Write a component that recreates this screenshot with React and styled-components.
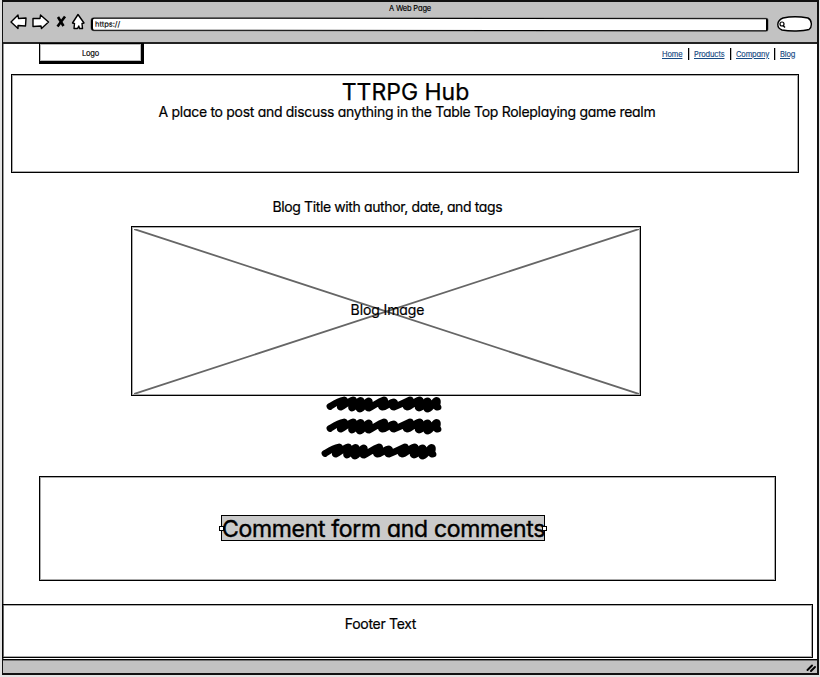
import React from "react";
import styled, { createGlobalStyle } from "styled-components";

const GlobalStyle = createGlobalStyle`
  * { box-sizing: border-box; }
  body { margin: 0; background: #fff; }
`;

const Browser = styled.div`
  width: 820px;
  height: 677px;
  display: flex;
  flex-direction: column;
  padding: 0 1px 2px 2px;
  background: #e4e4e4;
  color: #000;
  font-family: Inter, "Liberation Sans", sans-serif;
  font-feature-settings: "cv11";
  overflow: hidden;
`;

const Frame = styled.div`
  flex: 1;
  display: flex;
  flex-direction: column;
  border: 2px solid #111;
  border-left-width: 1px;
  background: #fff;
  box-shadow: inset 1px 0 0 #0006;
`;

const Chrome = styled.header`
  height: 42px;
  flex: none;
  background: #c2c2c2;
  border-bottom: 2px solid #222;
`;

const Small = styled.span`
  font-size: 7.5px;
  line-height: 9px;
  letter-spacing: ${(p) => p.$spacing || "-0.15px"};
  -webkit-text-stroke: 0.15px currentColor;
  white-space: nowrap;
`;

const WindowTitle = styled.div`
  display: flex;
  justify-content: center;
  padding: 2px 0 0 0;
  height: 11px;
`;

const Toolbar = styled.div`
  display: flex;
  align-items: flex-start;
  height: 28px;
`;

const NavIcons = styled.svg`
  width: 81px;
  height: 22px;
  margin-left: 5px;
  margin-top: -1px;
  flex: none;
`;

const Address = styled.div`
  width: 677px;
  height: 13px;
  margin: 5px 0 0 2px;
  padding: 0 0 0 2px;
  display: flex;
  align-items: center;
  background: #fff;
  border: 2px solid #000;
  border-width: 1px 2px 1px 2px;
  box-shadow: 0 0 0 0.5px #0006;
  border-radius: 3px 2px 2px 3px;
  transform: rotate(0.06deg);
`;

const Search = styled.svg`
  width: 38px;
  height: 18px;
  margin: 2px 0 0 8px;
  flex: none;
`;

const Page = styled.main`
  height: 615px;
  flex: none;
  display: flex;
  flex-direction: column;
  align-items: flex-start;
`;

const SiteHeader = styled.div`
  display: flex;
  align-items: flex-start;
  justify-content: space-between;
  width: 100%;
  height: 29px;
  padding: 0 20px 0 36px;
`;

const Logo = styled.div`
  width: 105px;
  height: 21px;
  margin-top: -1px;
  display: flex;
  align-items: center;
  justify-content: center;
  padding: 2px 0 0 0;
  border: solid #000;
  border-width: 1px 3px 3px 1px;
  box-shadow: inset 0 0 0 1px #0004;
`;

const Nav = styled.nav`
  display: flex;
  align-items: center;
  height: 12px;
  margin-top: 4px;
`;

const NavLink = styled(Small).attrs({ as: "a" })`
  color: #174a83;
  width: ${(p) => p.$width}px;
  text-decoration: underline;
  text-decoration-thickness: 1px;
  text-underline-offset: 1px;
`;

const Divider = styled.i`
  width: 1px;
  height: 12px;
  margin: 0 5px 0 5px;
  background: #000;
  box-shadow: 0.5px 0 0 #0008;
`;

const Panel = styled.section`
  width: ${(p) => p.$width}px;
  height: ${(p) => p.$height}px;
  flex: none;
  margin-left: ${(p) => p.$left}px;
  border: 1px solid #000;
  box-shadow: inset 0 0 0 1px #0005;
`;

const Hero = styled(Panel)`
  display: flex;
  flex-direction: column;
  align-items: center;
  padding: 6px 0 0 4px;
  margin-top: 1px;
`;

const Heading = styled.h1`
  margin: 0;
  font-size: 23px;
  font-weight: 400;
  line-height: 23px;
  -webkit-text-stroke: 0.25px #000;
`;

const Title = styled(Heading)`
  padding-right: 3px;
  line-height: 22px;
`;

const Copy = styled.p`
  margin: 0;
  font-size: 14px;
  line-height: 18px;
  white-space: nowrap;
  letter-spacing: ${(p) => p.$spacing}px;
  -webkit-text-stroke: 0.2px #000;
`;

const PostTitle = styled(Copy)`
  margin: 25px 0 10px 269.5px;
`;

const ImageSlot = styled(Panel)`
  display: grid;
  place-items: center;
  > * { grid-area: 1 / 1; }
`;

const Cross = styled.svg`
  width: 505px;
  height: 165px;
`;

const ImageLabel = styled(Copy)`
  padding: 0 0 2px 3px;
`;

const PostBody = styled.div`
  display: flex;
  flex-direction: column;
  height: 80px;
  margin-left: 314px;
`;

const Line = styled.svg`
  width: 126px;
  height: 18px;
  flex: none;
  margin: ${(p) => p.$top}px 0 0 ${(p) => p.$left}px;
`;

const Comments = styled(Panel)`
  padding: 38px 0 0 181px;
`;

const Selection = styled.div`
  display: flex;
  align-items: center;
  position: relative;
  width: 324px;
  height: 26px;
  background: #cacaca;
  border: 1px solid #000;
`;

const CommentText = styled(Heading).attrs({ as: "h2" })`
  letter-spacing: -0.32px;
  white-space: nowrap;
  padding-top: 3px;
  -webkit-text-stroke: 0.4px #000;
`;

const Handle = styled.i`
  position: absolute;
  top: 10px;
  ${(p) => p.$side}: -3px;
  width: 5px;
  height: 5px;
  background: #fff;
  border: 1px solid #000;
`;

const Footer = styled(Panel)`
  display: flex;
  justify-content: center;
  padding: 10px 54px 0 0;
  margin-top: 23px;
`;

const StatusBar = styled.footer`
  flex: 1;
  display: flex;
  justify-content: flex-end;
  align-items: center;
  padding: 3px 1px 0 0;
  background: #c2c2c2;
  border-top: 1px solid #000;
  box-shadow: inset 0 1px 0 #0006;
`;

const Grip = styled.svg`
  width: 10px;
  height: 8px;
`;

const Scribble = ({ top, left }) => (
  <Line $top={top} $left={left} viewBox="0 0 126 18">
    <path
      d="M7 11.5 C11 9 15 6 21 5 C24 6 15 13 18 12 C22 10 26 6 30 5 C33 5 27 13 29 13 C32 13 35 5 38 5.5 C40 7 34 14 37 14 C40 14 43 6 46 6 C48 7 42 13 46 13 C51 11 55 7 61 5 C64 5 56 11 59 12 C63 13 67 7 71 7 C73 8 67 12 71 12 C77 10 82 7 87 5 C90 5 80 11 84 12 C88 12 93 5 97 5 C99 6 93 13 96 13 C100 13 102 5 105 6 C107 7 101 14 105 14 C109 13 111 5 114 5.5 C116 7 111 13 115 12"
      fill="none"
      stroke="#000"
      strokeWidth="6.8"
      strokeLinecap="round"
      strokeLinejoin="round"
    />
  </Line>
);

export default function App() {
  return (
    <>
      <GlobalStyle />
      <Browser>
        <Frame>
          <Chrome>
            <WindowTitle><Small $spacing="-0.15px">A Web Page</Small></WindowTitle>
            <Toolbar>
              <NavIcons viewBox="8 12 81 22" fill="#fff" stroke="#000" strokeWidth="1.4" strokeLinejoin="round">
                <path d="M11 22 L18 15 L18.5 18.5 L26 18 L25.5 26 L18 25.5 L18 28.5 Z" />
                <path d="M33 18.5 L40 18.5 L40.5 15 L48.5 22 L41.5 28.5 L41 26 L33 26.5 Z" />
                <path d="M58 17 L63.5 26 M65 16.5 L57.5 26.5" strokeWidth="2.6" />
                <path d="M78 14.5 L84 23 L82 23.5 L82.5 28.5 L79.5 28.5 L78.8 26 L77.5 28.5 L74 28.5 L74.5 23.5 L72.5 23 Z" />
              </NavIcons>
              <Address><Small $spacing="0px">https://</Small></Address>
              <Search viewBox="776 15 38 18">
                <path d="M783 18 C790 16.5 801 16.7 808 18 C812 20 812.5 27 809 29.5 C803 31.3 790 31.5 782 30 C776.5 28 776 21 783 18Z" fill="#fff" stroke="#000" strokeWidth="1.4" />
                <circle cx="782" cy="24" r="2" fill="none" stroke="#000" strokeWidth="1.2" />
                <path d="M783 25.5 L785 27.5" stroke="#000" strokeWidth="1.4" />
              </Search>
            </Toolbar>
          </Chrome>
          <Page>
            <SiteHeader>
              <Logo><Small>Logo</Small></Logo>
              <Nav>
                <NavLink $width={21}>Home</NavLink>
                <Divider />
                <NavLink $width={31}>Products</NavLink>
                <Divider />
                <NavLink $width={33}>Company</NavLink>
                <Divider />
                <NavLink $width={17}>Blog</NavLink>
              </Nav>
            </SiteHeader>
            <Hero $left={8} $width={788} $height={99}>
              <Title>TTRPG Hub</Title>
              <Copy $spacing={-0.3}>A place to post and discuss anything in the Table Top Roleplaying game realm</Copy>
            </Hero>
            <PostTitle $spacing={-0.38}>Blog Title with author, date, and tags</PostTitle>
            <ImageSlot $left={128} $width={510} $height={170}>
              <Cross viewBox="0 0 505 165" stroke="#666" strokeWidth="1.8">
                <path d="M0 0 L505 165 M505 0 L0 165" />
              </Cross>
              <ImageLabel $spacing={-0.1}>Blog Image</ImageLabel>
            </ImageSlot>
            <PostBody>
              <Scribble top={-1} left={6} />
              <Scribble top={4} left={6} />
              <Scribble top={7} left={1} />
            </PostBody>
            <Comments $left={36} $width={737} $height={105}>
              <Selection>
                <CommentText>Comment form and comments</CommentText>
                <Handle $side="left" />
                <Handle $side="right" />
              </Selection>
            </Comments>
            <Footer $left={-1} $width={811} $height={54}>
              <Copy $spacing={-0.3}>Footer Text</Copy>
            </Footer>
          </Page>
          <StatusBar>
            <Grip viewBox="0 0 10 8" stroke="#000" strokeWidth="1.9" strokeLinecap="round">
              <path d="M1.5 6 L6 1.5 M5 7 L9 3" />
            </Grip>
          </StatusBar>
        </Frame>
      </Browser>
    </>
  );
}
